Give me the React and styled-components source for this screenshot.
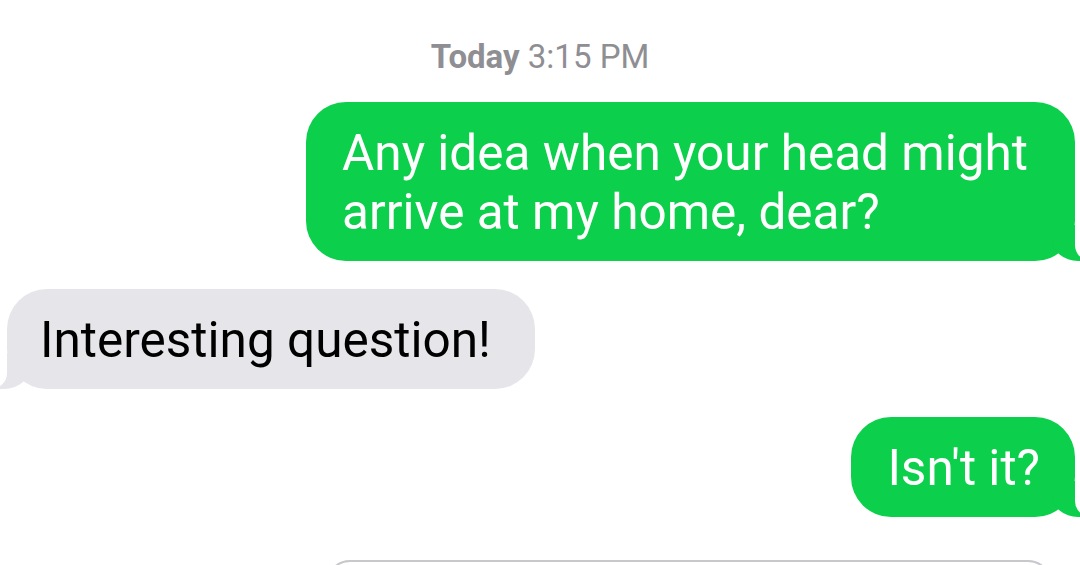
import React from "react";
import styled, { createGlobalStyle, css } from "styled-components";

const GREEN = "#0ccf4b";
const GRAY = "#e5e5ea";

const GlobalStyle = createGlobalStyle`
  html, body {
    margin: 0;
    padding: 0;
    background: #ffffff;
    overflow: hidden;
  }
  body {
    font-family: Roboto, "Liberation Sans", sans-serif;
    -webkit-font-smoothing: antialiased;
  }
`;

const Thread = styled.div`
  width: 1080px;
  height: 565px;
  overflow: hidden;
  display: flex;
  flex-direction: column;
  padding-top: 39px;
  box-sizing: border-box;
`;

const Stamp = styled.div`
  text-align: center;
  font-size: 33px;
  line-height: 36px;
  color: #8e8e93;
  margin-bottom: 27px;
  b {
    font-weight: 700;
  }
`;

const Row = styled.div`
  display: flex;
  justify-content: ${(p) => (p.$mine ? "flex-end" : "flex-start")};
  padding: ${(p) => (p.$mine ? "0 5px 0 0" : "0 0 0 7px")};
  margin-bottom: 28px;
`;

const sentTail = css`
  &::before {
    right: -9px;
    width: 32px;
    background: ${GREEN};
    border-bottom-left-radius: 26px 22px;
  }
  &::after {
    right: -40px;
    width: 40px;
    background: #ffffff;
    border-bottom-left-radius: 16px;
  }
`;

const receivedTail = css`
  &::before {
    left: -9px;
    width: 32px;
    background: ${GRAY};
    border-bottom-right-radius: 26px 22px;
  }
  &::after {
    left: -40px;
    width: 40px;
    background: #ffffff;
    border-bottom-right-radius: 16px;
  }
`;

const Bubble = styled.div`
  position: relative;
  max-width: 769px;
  box-sizing: border-box;
  padding: ${(p) => (p.$mine ? "22px 35px 19px 36px" : "22px 44px 19px 33px")};
  border-radius: 40px;
  font-size: 49.5px;
  line-height: 59px;
  background: ${(p) => (p.$mine ? GREEN : GRAY)};
  color: ${(p) => (p.$mine ? "#ffffff" : "#000000")};
  &::before,
  &::after {
    content: "";
    position: absolute;
    bottom: 0;
    height: 36px;
  }
  ${(p) => (p.$mine ? sentTail : receivedTail)}
`;

const Composer = styled.div`
  margin: 15px 28px 0 326px;
  height: 80px;
  flex-shrink: 0;
  border: 2px solid #c8c8cc;
  border-radius: 24px;
`;

const messages = [
  { mine: true, text: "Any idea when your head might arrive at my home, dear?" },
  { mine: false, text: "Interesting question!" },
  { mine: true, text: "Isn't it?" },
];

export default function App() {
  return (
    <>
      <GlobalStyle />
      <Thread>
        <Stamp>
          <b>Today</b> 3:15 PM
        </Stamp>
        {messages.map((m, i) => (
          <Row key={i} $mine={m.mine}>
            <Bubble $mine={m.mine}>{m.text}</Bubble>
          </Row>
        ))}
        <Composer />
      </Thread>
    </>
  );
}
